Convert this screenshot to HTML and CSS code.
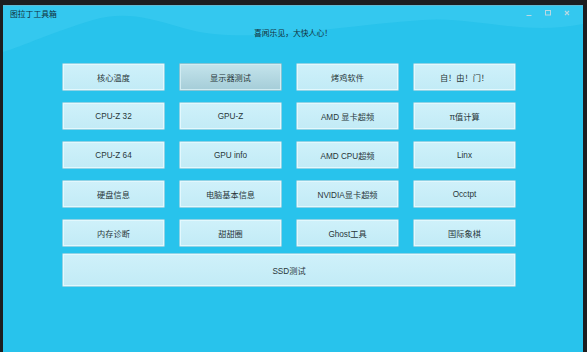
FILE: index.html
```html
<!DOCTYPE html>
<html lang="zh">
<head>
<meta charset="utf-8">
<title>图拉丁工具箱</title>
<link rel="stylesheet" href="styles.css">
</head>
<body>
<div class="frame">
  <div class="window">
    <svg class="wave" width="580" height="120" viewBox="0 0 580 120" aria-hidden="true">
      <path d="M0 0 H580 V18 C520 30 470 10 420 14 C330 20 240 40 180 22 C140 10 120 6 90 14 C50 26 20 40 0 46 Z" fill="#3fcdf2" opacity="0.5"/>
    </svg>
    <div class="titlebar">
      <span class="title">图拉丁工具箱</span>
      <div class="controls">
        <span class="ctl"><svg width="8" height="8" viewBox="0 0 8 8"><path d="M1.5 6.5 H6.5" stroke="#b9d9e3" stroke-width="1"/></svg></span>
        <span class="ctl"><svg width="8" height="8" viewBox="0 0 8 8"><rect x="1.5" y="1.5" width="5" height="4.5" fill="none" stroke="#b9d9e3" stroke-width="1"/></svg></span>
        <span class="ctl"><svg width="8" height="8" viewBox="0 0 8 8"><path d="M2 2 L6 6 M6 2 L2 6" stroke="#b9d9e3" stroke-width="1.1"/></svg></span>
      </div>
    </div>
    <p class="subtitle">喜闻乐见，大快人心！</p>
    <div class="grid">
      <button class="btn">核心温度</button>
      <button class="btn active">显示器测试</button>
      <button class="btn">烤鸡软件</button>
      <button class="btn">自！由！门！</button>
      <button class="btn">CPU-Z 32</button>
      <button class="btn">GPU-Z</button>
      <button class="btn">AMD 显卡超频</button>
      <button class="btn">π值计算</button>
      <button class="btn">CPU-Z 64</button>
      <button class="btn">GPU info</button>
      <button class="btn">AMD CPU超频</button>
      <button class="btn">Linx</button>
      <button class="btn">硬盘信息</button>
      <button class="btn">电脑基本信息</button>
      <button class="btn">NVIDIA显卡超频</button>
      <button class="btn">Occtpt</button>
      <button class="btn">内存诊断</button>
      <button class="btn">甜甜圈</button>
      <button class="btn">Ghost工具</button>
      <button class="btn">国际象棋</button>
      <button class="btn wide">SSD测试</button>
    </div>
  </div>
</div>
</body>
</html>
```

FILE: styles.css
```css
html, body {
  margin: 0;
  padding: 0;
  background: #1c1e20;
}
.frame {
  width: 587px;
  height: 352px;
  box-sizing: border-box;
  padding: 5px 4px 0 3px;
  background: #1c1e20;
  overflow: hidden;
}
.window {
  position: relative;
  height: 100%;
  background: #28c3ec;
  border-top: 1px solid #5fb9d3;
  box-sizing: border-box;
  font-family: "Liberation Sans", "Noto Sans CJK SC", sans-serif;
  overflow: hidden;
}
.wave {
  position: absolute;
  left: 0;
  top: 0;
}
.titlebar {
  position: relative;
  display: flex;
  justify-content: space-between;
  align-items: center;
  height: 14px;
  padding: 0 8px 0 7px;
}
.title {
  font-size: 7.8px;
  color: #12303a;
  padding-top: 1px;
}
.controls {
  display: flex;
  align-items: center;
  gap: 2px;
}
.ctl {
  display: flex;
  align-items: center;
  justify-content: center;
  width: 17px;
  height: 12px;
}
.subtitle {
  position: relative;
  margin: 7px 0 0;
  text-align: center;
  font-size: 7.8px;
  color: #12303a;
  line-height: 14px;
}
.grid {
  position: relative;
  display: grid;
  grid-template-columns: repeat(4, 103px);
  grid-template-rows: repeat(5, 28px) 29px;
  column-gap: 14px;
  row-gap: 11px;
  margin: 22px 0 0 59px;
}
.btn {
  font-family: "Liberation Sans", "Noto Sans CJK SC", sans-serif;
  font-size: 8.2px;
  color: #283639;
  background: linear-gradient(#cff1fa, #c2ebf6);
  border: 1px solid #8fd3e6;
  box-shadow: inset 0 0 0 1px #e3f8fd;
  border-radius: 1px;
  padding: 0;
  margin: 0;
}
.btn.active {
  background: linear-gradient(#c4e4ec, #a5cdd8);
  box-shadow: inset 0 0 0 1px #d2ecf2;
  border-color: #86c4d4;
}
.btn.wide {
  grid-column: 1 / -1;
  height: 34px;
  margin-top: -5px;
}
```
